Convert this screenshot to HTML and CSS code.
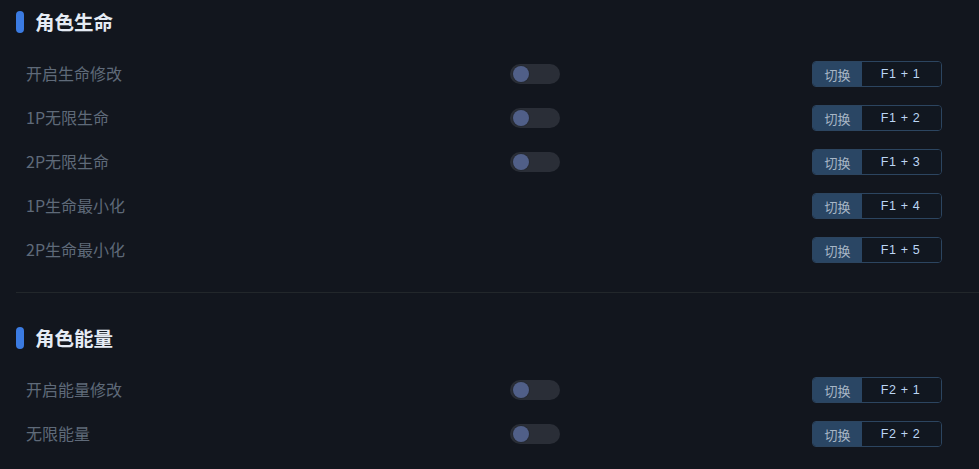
FILE: index.html
```html
<!DOCTYPE html>
<html lang="zh-CN">
<head>
<meta charset="utf-8">
<link rel="stylesheet" href="styles.css">
</head>
<body>
<div class="page">
  <section class="section section-first">
    <h2 class="title"><span class="title-bar"></span>角色生命</h2>
    <div class="row">
      <span class="label">开启生命修改</span>
      <span class="toggle"><span class="knob"></span></span>
      <span class="spacer"></span>
      <span class="hotkey"><span class="hk-action">切换</span><span class="hk-keys">F1 + 1</span></span>
    </div>
    <div class="row">
      <span class="label">1P无限生命</span>
      <span class="toggle"><span class="knob"></span></span>
      <span class="spacer"></span>
      <span class="hotkey"><span class="hk-action">切换</span><span class="hk-keys">F1 + 2</span></span>
    </div>
    <div class="row">
      <span class="label">2P无限生命</span>
      <span class="toggle"><span class="knob"></span></span>
      <span class="spacer"></span>
      <span class="hotkey"><span class="hk-action">切换</span><span class="hk-keys">F1 + 3</span></span>
    </div>
    <div class="row">
      <span class="label">1P生命最小化</span>
      <span class="no-toggle"></span>
      <span class="spacer"></span>
      <span class="hotkey"><span class="hk-action">切换</span><span class="hk-keys">F1 + 4</span></span>
    </div>
    <div class="row">
      <span class="label">2P生命最小化</span>
      <span class="no-toggle"></span>
      <span class="spacer"></span>
      <span class="hotkey"><span class="hk-action">切换</span><span class="hk-keys">F1 + 5</span></span>
    </div>
  </section>
  <section class="section section-next">
    <h2 class="title"><span class="title-bar"></span>角色能量</h2>
    <div class="row">
      <span class="label">开启能量修改</span>
      <span class="toggle"><span class="knob"></span></span>
      <span class="spacer"></span>
      <span class="hotkey"><span class="hk-action">切换</span><span class="hk-keys">F2 + 1</span></span>
    </div>
    <div class="row">
      <span class="label">无限能量</span>
      <span class="toggle"><span class="knob"></span></span>
      <span class="spacer"></span>
      <span class="hotkey"><span class="hk-action">切换</span><span class="hk-keys">F2 + 2</span></span>
    </div>
  </section>
</div>
</body>
</html>
```

FILE: styles.css
```css
* { box-sizing: border-box; }
html, body {
  margin: 0;
  padding: 0;
  background: #12161e;
  height: 100%;
  overflow: hidden;
}
body {
  font-family: "Noto Sans CJK SC", "Noto Sans", sans-serif;
}
.page {
  padding-left: 16px;
}
.section {
  padding-bottom: 20px;
}
.section-first {
  padding-top: 11px;
  border-bottom: 1px solid #22272b;
}
.section-next {
  padding-top: 34px;
}
.title {
  margin: 0 0 19px 0;
  height: 22px;
  display: flex;
  align-items: center;
  gap: 11px;
  font-size: 19.5px;
  font-weight: 700;
  color: #e5ebf4;
  line-height: 22px;
}
.title-bar {
  width: 8px;
  height: 22px;
  border-radius: 4px;
  background: #3b7be2;
}
.row {
  display: grid;
  grid-template-columns: 484px 50px 1fr auto;
  align-items: center;
  height: 44px;
  padding-left: 10px;
  padding-right: 37px;
}
.label {
  font-size: 16px;
  color: #5f6a79;
  line-height: 20px;
  position: relative;
  top: -1px;
}
.toggle {
  width: 50px;
  height: 20px;
  border-radius: 10px;
  background: #2a2e37;
  display: flex;
  align-items: center;
  padding-left: 3px;
}
.knob {
  width: 16px;
  height: 16px;
  border-radius: 50%;
  background: #505f88;
  box-shadow: 0 0 0 1px #262a33;
}
.hotkey {
  display: flex;
  width: 130px;
  height: 26px;
  border: 1px solid #2c4560;
  border-radius: 4px;
  overflow: hidden;
}
.hk-action {
  width: 49px;
  background: #2a4664;
  color: #a8b6c6;
  font-size: 13px;
  display: flex;
  align-items: center;
  justify-content: center;
}
.hk-keys {
  flex: 1;
  background: #111720;
  color: #bcd6f4;
  font-family: "Liberation Sans", Arial, sans-serif;
  font-size: 12.5px;
  letter-spacing: 0.6px;
  white-space: pre;
  display: flex;
  align-items: center;
  justify-content: center;
  padding-right: 2px;
}
```
